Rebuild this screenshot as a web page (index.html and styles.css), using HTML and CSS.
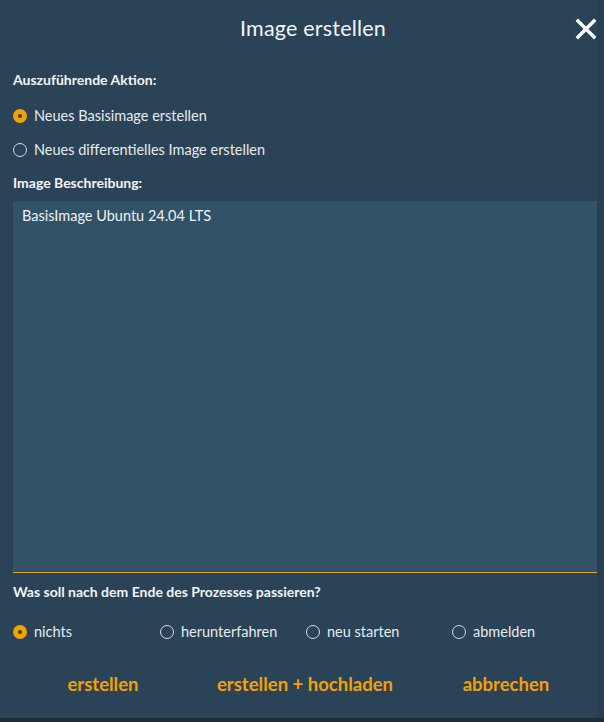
FILE: index.html
```html
<!DOCTYPE html>
<html lang="de">
<head>
<meta charset="utf-8">
<link rel="stylesheet" href="styles.css">
</head>
<body>
<div class="dialog">
  <header class="head">
    <h1 class="title">Image erstellen</h1>
    <button class="close" aria-label="Schließen">
      <svg width="22" height="22" viewBox="0 0 22 22"><path d="M3 3 L19 19 M19 3 L3 19" stroke="#fff" stroke-width="3.4" stroke-linecap="square"/></svg>
    </button>
  </header>
  <div class="label lbl-action">Auszuführende Aktion:</div>
  <div class="radios-v">
    <label class="radio"><span class="dot on"></span>Neues Basisimage erstellen</label>
    <label class="radio"><span class="dot"></span>Neues differentielles Image erstellen</label>
  </div>
  <div class="label lbl-desc">Image Beschreibung:</div>
  <div class="area">BasisImage Ubuntu 24.04 LTS</div>
  <div class="label lbl-after">Was soll nach dem Ende des Prozesses passieren?</div>
  <div class="radios-h">
    <label class="radio"><span class="dot on"></span>nichts</label>
    <label class="radio"><span class="dot"></span>herunterfahren</label>
    <label class="radio"><span class="dot"></span>neu starten</label>
    <label class="radio"><span class="dot"></span>abmelden</label>
  </div>
  <div class="buttons">
    <button class="btn">erstellen</button>
    <button class="btn">erstellen + hochladen</button>
    <button class="btn">abbrechen</button>
  </div>
</div>
<div class="footer-strip"></div>
</body>
</html>
```
FILE: styles.css
```css
html, body {
  margin: 0;
  padding: 0;
  background: #2a4357;
}
body {
  width: 604px;
  height: 722px;
  overflow: hidden;
  font-family: Lato, "Open Sans", sans-serif;
  color: #eef2f5;
}
.dialog {
  height: 718px;
  padding: 0 7px 0 13px;
  box-sizing: border-box;
  display: flex;
  flex-direction: column;
  background: linear-gradient(to right, #2a4357 0, #2a4357 597px, #283f52 597px);
}
.head {
  height: 58px;
  display: flex;
  align-items: center;
  justify-content: center;
  position: relative;
}
.title {
  margin: 0 0 2px 0;
  font-weight: 400;
  font-size: 21.5px;
  color: #f3f5f7;
  padding-left: 16px;
  letter-spacing: 0.2px;
}
.close {
  position: absolute;
  right: 0;
  top: 18px;
  background: none;
  border: 0;
  padding: 0;
  width: 22px;
  height: 22px;
}
.close svg { display: block; }
.label {
  font-weight: 700;
  font-size: 14px;
  color: #f3f5f7;
}
.lbl-action { margin-top: 13px; }
.radios-v {
  display: flex;
  flex-direction: column;
  gap: 17px;
  margin-top: 19px;
}
.radio {
  display: flex;
  align-items: center;
  font-size: 14.5px;
  color: #e6ebef;
  white-space: nowrap;
}
.dot {
  width: 14px;
  height: 14px;
  box-sizing: border-box;
  border: 1.6px solid #d3d9de;
  border-radius: 50%;
  margin-right: 7px;
  flex: none;
  position: relative;
}
.dot.on {
  border: 0;
  background: #f5a003;
}
.dot.on::after {
  content: "";
  position: absolute;
  left: 5px;
  top: 5px;
  width: 4px;
  height: 4px;
  border-radius: 50%;
  background: #2a4357;
}
.lbl-desc { margin-top: 16px; }
.area {
  margin-top: 10px;
  height: 372px;
  background: #325268;
  border-bottom: 1.5px solid #f0a21e;
  padding: 6px 9px;
  box-sizing: border-box;
  font-size: 14.5px;
  color: #eef2f5;
}
.lbl-after { margin-top: 10px; }
.radios-h {
  display: grid;
  grid-template-columns: 147px 146px 146px 1fr;
  margin-top: 23px;
}
.buttons {
  display: grid;
  grid-template-columns: 180px 224px 178px;
  justify-items: center;
  margin-top: 33px;
}
.btn {
  background: none;
  border: 0;
  padding: 0;
  font-family: inherit;
  font-weight: 700;
  font-size: 18.5px;
  color: #f5a003;
}
.footer-strip {
  height: 4px;
  background: #1f2c37;
}
```
